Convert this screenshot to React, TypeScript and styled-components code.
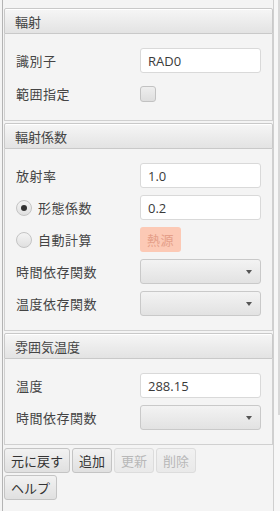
import styled, { createGlobalStyle } from "styled-components";

const GlobalStyle = createGlobalStyle`
  html, body {
    margin: 0;
    padding: 0;
    background: #f4f4f4;
  }
  body {
    font-family: "Open Sans", "Noto Sans CJK JP", sans-serif;
    font-size: 13px;
    color: #444;
  }
`;

const Frame = styled.div`
  display: flex;
  width: 280px;
  height: 511px;
  overflow: hidden;
  background: #f4f4f4;
`;

const Main = styled.div`
  flex: 1;
  margin-left: 2px;
  border-left: 1px solid #b4b4b4;
  padding: 8px 0 0 1px;
  display: flex;
  flex-direction: column;
  gap: 1px;
`;

const ScrollBar = styled.div`
  width: 6px;
  border-left: 1px solid #cfcfcf;
  background: #f7f7f7;
  position: relative;
  .thumb {
    position: absolute;
    right: 0;
    top: 0;
    width: 2px;
    height: 415px;
    background: #d8d8d8;
  }
`;

const Section = styled.section`
  display: flex;
  flex-direction: column;
  margin-bottom: 1px;
`;

const Header = styled.div`
  height: 24px;
  display: flex;
  align-items: center;
  padding-left: 10px;
  border: 1px solid #c9c9c9;
  border-radius: 2px 2px 0 0;
  background: linear-gradient(#f6f6f6, #e3e3e3);
  box-shadow: inset 0 1px 0 #fff;
  color: #444;
`;

const Body = styled.div<{ $gap: number }>`
  display: flex;
  flex-direction: column;
  gap: ${(p) => p.$gap}px;
  padding: 14px 10px 14px 10px;
  border: 1px solid #d0d0d0;
  border-top: none;
  background: #f4f4f4;
`;

const Row = styled.div`
  display: flex;
  align-items: center;
  height: 25px;
`;

const Label = styled.div`
  width: 124px;
  padding-left: 1px;
  letter-spacing: 0.5px;
`;

const TextField = styled.div`
  box-sizing: border-box;
  width: 121px;
  height: 25px;
  border: 1px solid #d9d9d9;
  border-radius: 3px;
  background: #fff;
  display: flex;
  align-items: center;
  padding-left: 7px;
  color: #3a3a3a;
`;

const Select = styled.div`
  width: 121px;
  height: 25px;
  box-sizing: border-box;
  border: 1px solid #c9c9c9;
  border-radius: 3px;
  background: linear-gradient(#f3f3f3, #e2e2e2);
  display: flex;
  align-items: center;
  justify-content: flex-end;
  padding-right: 8px;
  &::after {
    content: "";
    border-left: 3.5px solid transparent;
    border-right: 3.5px solid transparent;
    border-top: 4px solid #555;
  }
`;

const CheckBox = styled.div`
  width: 16px;
  height: 16px;
  box-sizing: border-box;
  border: 1px solid #c2c2c2;
  border-radius: 3px;
  background: linear-gradient(#eeeeee, #dedede);
`;

const RadioLabel = styled.div`
  width: 124px;
  display: flex;
  align-items: center;
  gap: 6px;
  padding-left: 1px;
  letter-spacing: 0.5px;
`;

const Radio = styled.span<{ $checked?: boolean }>`
  width: 16px;
  height: 16px;
  box-sizing: border-box;
  border-radius: 50%;
  border: 1px solid #c4c4c4;
  background: linear-gradient(#f4f4f4, #e0e0e0);
  display: flex;
  align-items: center;
  justify-content: center;
  &::after {
    content: "";
    display: ${(p) => (p.$checked ? "block" : "none")};
    width: 6px;
    height: 6px;
    border-radius: 50%;
    background: #333;
  }
`;

const SourceButton = styled.div`
  width: 41px;
  height: 25px;
  border-radius: 3px;
  background: #fcc9b5;
  color: #e59f89;
  display: flex;
  align-items: center;
  justify-content: center;
  letter-spacing: 0.5px;
`;

const Buttons = styled.div`
  display: flex;
  flex-direction: column;
  gap: 2px;
  padding: 1px 0 0 0;
`;

const ButtonRow = styled.div`
  display: flex;
  gap: 2px;
`;

const Button = styled.div<{ $disabled?: boolean }>`
  height: 25px;
  box-sizing: border-box;
  padding: 0 6px;
  border: 1px solid ${(p) => (p.$disabled ? "#dcdcdc" : "#c4c4c4")};
  border-radius: 3px;
  background: ${(p) =>
    p.$disabled ? "linear-gradient(#f1f1f1, #e9e9e9)" : "linear-gradient(#f2f2f2, #e0e0e0)"};
  color: ${(p) => (p.$disabled ? "#b8b8b8" : "#333")};
  display: flex;
  align-items: center;
`;

const App = () => {
  return (
    <Frame>
      <GlobalStyle />
      <Main>
        <Section>
          <Header>輻射</Header>
          <Body $gap={8}>
            <Row>
              <Label>識別子</Label>
              <TextField>RAD0</TextField>
            </Row>
            <Row>
              <Label>範囲指定</Label>
              <CheckBox />
            </Row>
          </Body>
        </Section>
        <Section>
          <Header>輻射係数</Header>
          <Body $gap={7}>
            <Row>
              <Label>放射率</Label>
              <TextField>1.0</TextField>
            </Row>
            <Row>
              <RadioLabel>
                <Radio $checked />
                形態係数
              </RadioLabel>
              <TextField>0.2</TextField>
            </Row>
            <Row>
              <RadioLabel>
                <Radio />
                自動計算
              </RadioLabel>
              <SourceButton>熱源</SourceButton>
            </Row>
            <Row>
              <Label>時間依存関数</Label>
              <Select />
            </Row>
            <Row>
              <Label>温度依存関数</Label>
              <Select />
            </Row>
          </Body>
        </Section>
        <Section>
          <Header>雰囲気温度</Header>
          <Body $gap={7}>
            <Row>
              <Label>温度</Label>
              <TextField>288.15</TextField>
            </Row>
            <Row>
              <Label>時間依存関数</Label>
              <Select />
            </Row>
          </Body>
        </Section>
        <Buttons>
          <ButtonRow>
            <Button>元に戻す</Button>
            <Button>追加</Button>
            <Button $disabled>更新</Button>
            <Button $disabled>削除</Button>
          </ButtonRow>
          <ButtonRow>
            <Button>ヘルプ</Button>
          </ButtonRow>
        </Buttons>
      </Main>
      <ScrollBar>
        <div className="thumb" />
      </ScrollBar>
    </Frame>
  );
};

export default App;
